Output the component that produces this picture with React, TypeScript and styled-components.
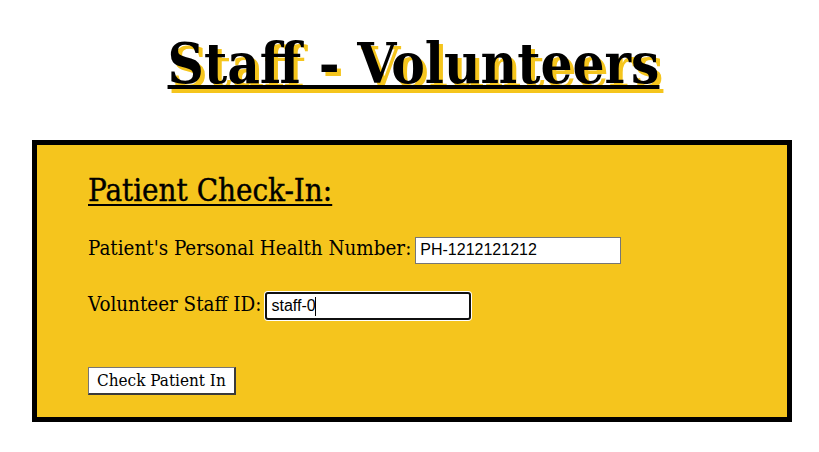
import React from "react";
import styled, { createGlobalStyle } from "styled-components";

const YELLOW = "#F5C51D";
const SLAB = `"DejaVu Serif Condensed", "DejaVu Serif", serif`;

const GlobalStyle = createGlobalStyle`
  html, body { margin: 0; padding: 0; background: #ffffff; }
  body { font-family: ${SLAB}; color: #000; }
`;

const Page = styled.div`
  display: flex;
  flex-direction: column;
  padding-top: 23px;
`;

const Title = styled.h1`
  margin: 0;
  font-family: ${SLAB};
  font-stretch: condensed;
  font-weight: 700;
  font-size: 56px;
  line-height: 80px;
  text-align: center;
  padding-left: 8px;
  text-decoration: underline;
  text-decoration-thickness: 4px;
  text-underline-offset: 2px;
  text-shadow: 4px 4px 0 ${YELLOW};
`;

const Card = styled.section`
  box-sizing: border-box;
  width: 760px;
  margin: 37px 0 0 32px;
  border: 5px solid #000;
  background: ${YELLOW};
  padding: 27px 40px 20px 51px;
  display: flex;
  flex-direction: column;
  align-items: flex-start;
`;

const Heading = styled.h2`
  margin: 0;
  font-family: ${SLAB};
  font-stretch: condensed;
  font-weight: 500;
  font-size: 31px;
  line-height: 36px;
  -webkit-text-stroke: 0.4px #000;
  text-decoration: underline;
  text-decoration-thickness: 2px;
  text-underline-offset: 3px;
`;

const Row = styled.div<{ $gap: number }>`
  display: flex;
  align-items: baseline;
  gap: 4px;
  margin-top: ${(p) => p.$gap}px;
`;

const Label = styled.label`
  font-family: ${SLAB};
  font-stretch: condensed;
  font-size: 20.4px;
  line-height: 24px;
`;

const FieldWrap = styled.span`
  position: relative;
  display: inline-flex;
`;

const Input = styled.input<{ $focused?: boolean }>`
  box-sizing: border-box;
  width: 206px;
  height: ${(p) => (p.$focused ? 28 : 27)}px;
  margin: 0;
  padding: 0 4px;
  font-family: "Liberation Sans", Arial, sans-serif;
  font-size: 16px;
  color: #000;
  background: #fff;
  border: ${(p) => (p.$focused ? "2px solid #101010" : "1px solid #767676")};
  border-radius: ${(p) => (p.$focused ? "3px" : "0")};
  box-shadow: ${(p) => (p.$focused ? "0 0 0 1px #ffffff" : "none")};
  outline: none;
`;

const Caret = styled.span`
  position: absolute;
  left: 50px;
  top: 5px;
  width: 1px;
  height: 19px;
  background: #000;
  pointer-events: none;
`;

const Button = styled.button`
  margin-top: 47px;
  margin-bottom: 2px;
  box-sizing: border-box;
  height: 28px;
  padding: 0 8px;
  font-family: ${SLAB};
  font-stretch: condensed;
  font-size: 17px;
  color: #000;
  background: #fff;
  border-style: solid;
  border-width: 1px 2px 2px 1px;
  border-color: #767676 #3a3a3a #3a3a3a #767676;
  border-radius: 0;
  cursor: pointer;
`;

export default function App() {
  return (
    <>
      <GlobalStyle />
      <Page>
        <Title>Staff - Volunteers</Title>
        <Card>
          <Heading>Patient Check-In:</Heading>
          <Row $gap={28}>
            <Label htmlFor="phn">Patient's Personal Health Number:</Label>
            <Input id="phn" defaultValue="PH-1212121212" />
          </Row>
          <Row $gap={28}>
            <Label htmlFor="staff">Volunteer Staff ID:</Label>
            <FieldWrap>
              <Input id="staff" $focused defaultValue="staff-0" />
              <Caret />
            </FieldWrap>
          </Row>
          <Button type="button">Check Patient In</Button>
        </Card>
      </Page>
    </>
  );
}
